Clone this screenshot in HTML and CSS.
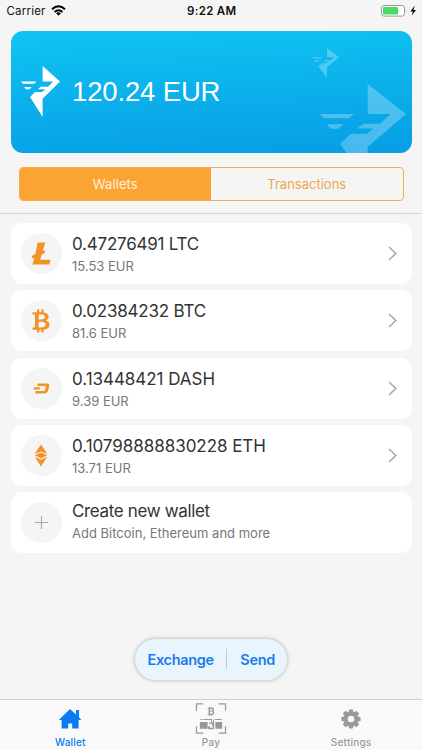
FILE: index.html
```
<!DOCTYPE html>
<html lang="en">
<head>
<meta charset="utf-8">
<title>Wallet</title>
<link rel="stylesheet" href="styles.css">
</head>
<body>
<svg width="0" height="0" class="defs">
  <symbol id="bird" viewBox="0 0 258 295" preserveAspectRatio="none">
    <path d="M143 0L258 90 143 190V295L60 180 93 150H140L160 134H112L130 120H180L212 90H143ZM0 90H102L87 103H12ZM20 121H70L55 135H32Z"/>
  </symbol>
  <symbol id="btc" viewBox="0 0 18 24">
    <path fill-rule="evenodd" d="M.5 3.2H5V.5H7.3V3.2H9.3V.5H11.6V3.4C15 3.8 16.6 5.4 16.6 7.7 16.6 9.6 15.5 10.8 13.7 11.4 16.2 12 17.5 13.6 17.5 15.8 17.5 18.8 15.2 20.5 11.6 20.7V23.5H9.3V20.8H7.3V23.5H5V20.8H.5V18.4H3V5.6H.5ZM6.6 5.6V10.5H9C11.4 10.5 12.7 9.8 12.7 8S11.4 5.6 9 5.6ZM6.6 12.8V18.4H9.4C12 18.4 13.5 17.5 13.5 15.6S12 12.8 9.4 12.8Z"/>
  </symbol>
</svg>
<div class="screen">
  <header class="status">
    <div class="carrier"><span>Carrier</span>
      <svg class="wifi" viewBox="0 0 15 11"><g fill="none" stroke="#000" stroke-width="2"><path d="M1 4.2Q7.5-1.8 14 4.2M3.5 7Q7.5 3.4 11.5 7"/></g><path d="M5.1 8.2Q7.5 6.4 9.9 8.2L7.5 10.7Z"/></svg>
    </div>
    <span class="clock">9:22 AM</span>
    <div class="power">
      <svg class="battery" viewBox="0 0 36 12"><rect x=".5" y=".5" width="23" height="10.6" rx="2.6" fill="#fff" stroke="#999"/><rect x="2" y="2" width="15" height="7.5" rx="1" fill="#4cd964"/><path d="M24.8 4Q26.2 5.8 24.8 7.6Z" fill="#999"/><path d="M33.8.6L29.4 6.4H32L30.6 10.8 35 5H32.4Z"/></svg>
    </div>
  </header>
  <section class="balance">
    <svg class="bird"><use href="#bird"/></svg>
    <span class="amount">120.24 EUR</span>
    <svg class="bird-small"><use href="#bird"/></svg>
    <svg class="bird-large"><use href="#bird"/></svg>
  </section>
  <nav class="segments"><span class="segment active">Wallets</span><span class="segment transactions">Transactions</span></nav>
  <main class="list">
    <article class="card">
      <div class="coin"><svg width="20" height="23" viewBox="0 0 20 23"><path d="M6.6.5H14.3L11.8 9 14.2 8 13.3 11.4 10.8 12.5 9.2 17.7H19.7L18.3 22.4H1.4L3.3 15.7.5 16.8 1.4 13.4 4.3 12.2Z"/></svg></div>
      <div class="info"><h2 class="tight">0.47276491 LTC</h2><p>15.53 EUR</p></div>
      <svg class="chevron" viewBox="0 0 9 15"><path d="M1 1L7.8 7.5 1 14"/></svg>
    </article>
    <article class="card">
      <div class="coin"><svg width="18" height="24"><use href="#btc"/></svg></div>
      <div class="info"><h2 class="tight">0.02384232 BTC</h2><p>81.6 EUR</p></div>
      <svg class="chevron" viewBox="0 0 9 15"><path d="M1 1L7.8 7.5 1 14"/></svg>
    </article>
    <article class="card">
      <div class="coin"><svg width="17" height="11" viewBox="0 0 17 11"><path d="M4.8.4H13.6Q16.8.4 16.2 3L15.2 7.2Q14.5 10.5 11 10.5H2L2.7 8H10.4Q11.8 8 12.1 6.8L12.7 4.3Q13.1 2.9 11.7 2.9H4.1ZM1.1 4.3H7.2L6.6 6.6H.4Z"/></svg></div>
      <div class="info"><h2>0.13448421 DASH</h2><p>9.39 EUR</p></div>
      <svg class="chevron" viewBox="0 0 9 15"><path d="M1 1L7.8 7.5 1 14"/></svg>
    </article>
    <article class="card">
      <div class="coin"><svg width="14" height="23" viewBox="0 0 14 23"><path d="M7 .4L13.4 10 7 7.5.6 10ZM7 8.6L13.2 11.2 7 14.6.8 11.2ZM.7 12.7L7 15.8 13.3 12.7 7 22.6Z"/></svg></div>
      <div class="info"><h2>0.10798888830228 ETH</h2><p>13.71 EUR</p></div>
      <svg class="chevron" viewBox="0 0 9 15"><path d="M1 1L7.8 7.5 1 14"/></svg>
    </article>
    <article class="card">
      <div class="coin"><svg width="13" height="13" viewBox="0 0 13 13"><path d="M6.5 0V13M0 6.5H13" stroke="#aaa" stroke-width="1.2"/></svg></div>
      <div class="info create"><h2>Create new wallet</h2><p>Add Bitcoin, Ethereum and more</p></div>
    </article>
  </main>
  <div class="actions"><span>Exchange</span><i></i><span>Send</span></div>
  <footer class="tabs">
    <div class="tab selected"><svg width="24" height="31" viewBox="0 0 24 31"><path d="M12 6L18 11.5V7H21V14.2L23.4 17H20.6V25.5H14.2V20.5H10.2V25.5H3.6V17H.8Z"/></svg><span>Wallet</span></div>
    <div class="tab"><svg width="32" height="31" viewBox="0 0 32 32"><path d="M1 8V1H8M24 1H31V8M1 24V31H8M24 31H31V24" fill="none" stroke="#999" stroke-width="1.3"/><svg x="12" y="3.5" width="8" height="10"><use href="#btc"/></svg><path d="M4.5 19.5H12.5V26.5H4.5ZM20.5 19.5H27.5V26.5H20.5ZM5 16.5H7V17.5H5ZM8 16.5H17V20H16V17.5H8ZM20 16.5H27V17.5H20ZM14 20H18V24H17V21.5H14ZM13 24H15V25.5H18V27H13ZM18 17H19.2V27H18Z"/></svg><span>Pay</span></div>
    <div class="tab settings"><svg width="22" height="31" viewBox="0 0 22 31"><g transform="translate(11 16)"><g id="teeth"><rect x="-2.2" y="-9.6" width="4.4" height="19.2" rx="1"/><rect x="-9.6" y="-2.2" width="19.2" height="4.4" rx="1"/></g><use href="#teeth" transform="rotate(45)"/><circle r="7.4"/><circle r="3.3" fill="#f9f9f9"/></g></svg><span>Settings</span></div>
  </footer>
</div>
</body>
</html>
```
FILE: styles.css
```
* { box-sizing: border-box; }
body { margin: 0; background: #f5f5f5; font-family: Inter, "Liberation Sans", sans-serif; }
.defs { position: absolute; }
.screen { width: 422px; height: 750px; display: flex; flex-direction: column; position: relative; overflow: hidden; }
.status { height: 30px; flex: none; display: grid; grid-template-columns: 1fr auto 1fr; padding: 0 5px 0 6.5px; font-size: 11.5px; line-height: 22px; color: #111; }
.carrier { display: flex; gap: 5.5px; letter-spacing: .2px; }
.wifi { width: 15px; height: 11px; margin-top: 5px; }
.clock { font-weight: 600; letter-spacing: .3px; }
.power { display: flex; justify-content: flex-end; }
.battery { width: 36px; height: 12px; margin-top: 5px; }
.balance { position: relative; flex: none; width: 401px; height: 122.5px; margin: .7px 0 0 10.5px; border-radius: 12px; overflow: hidden; display: flex; align-items: center; gap: 12px; padding-left: 10.5px; background: linear-gradient(177deg, #10c4f2, #069de5); color: #fff; }
.bird { width: 39px; height: 51px; fill: #fff; flex: none; }
.amount { font: 27.5px "Liberation Sans", sans-serif; letter-spacing: -.15px; white-space: nowrap; }
.bird-small, .bird-large { position: absolute; fill: rgba(255,255,255,.27); }
.bird-small { left: 301.5px; top: 17.5px; width: 27px; height: 30px; }
.bird-large { left: 309px; top: 53.5px; width: 86px; height: 98px; }
.segments { display: flex; flex: none; width: 385px; height: 34px; margin: 14px 0 0 18.5px; border: 1px solid #f4ab50; border-radius: 4px; overflow: hidden; font-size: 13px; line-height: 32px; }
.segment { flex: 1; text-align: center; color: #f0a64c; letter-spacing: .1px; }
.active { background: #fba433; color: #fff0dc; }
.transactions { letter-spacing: 0; }
.list { display: flex; flex-direction: column; gap: 6.2px; margin-top: 12px; border-top: 1px solid #d8d8d8; padding: 9px 10.5px 0; }
.card { height: 61px; border-radius: 11px; background: #fff; display: flex; align-items: center; padding: 0 14px 0 10px; }
.coin { width: 41px; height: 41px; flex: none; border-radius: 50%; background: #f5f5f5; display: flex; align-items: center; justify-content: center; fill: #f39227; }
.info { margin-left: 10.5px; flex: 1; padding-top: 2px; }
h2 { margin: 0; font-size: 17px; line-height: 23px; font-weight: 400; color: #333; white-space: nowrap; letter-spacing: -.04px; }
.tight { letter-spacing: -.22px; }
p { margin: 0; font-size: 13px; line-height: 20px; color: #777; white-space: nowrap; }
.create { padding: 0 0 2px; }
.create h2 { letter-spacing: -.35px; }
.chevron { width: 9px; height: 15px; fill: none; stroke: #aaa; stroke-width: 1.6; margin-right: 1px; }
.actions { position: absolute; left: 135px; top: 638.5px; width: 152px; height: 41px; border-radius: 21px; background: #e9f5fd; box-shadow: 0 0 4px rgba(70,60,60,.4); display: flex; align-items: center; padding-left: 12.5px; color: #1c7bec; font-size: 14.5px; font-weight: 600; letter-spacing: -.32px; }
.actions i { width: 1px; height: 20px; background: #c2cbd2; margin: 0 13px 0 12.5px; }
.tabs { position: absolute; left: 0; right: 0; bottom: 0; height: 51px; border-top: 1px solid #cfcfcf; background: #f9f9f9; display: grid; grid-template-columns: repeat(3, 1fr); color: #999; fill: #999; font-size: 10px; font-weight: 500; letter-spacing: .2px; }
.tab { display: flex; flex-direction: column; align-items: center; padding-top: 3px; line-height: 16px; }
.selected { color: #087bf5; fill: #087bf5; }
.settings { padding-right: 1px; }
```
